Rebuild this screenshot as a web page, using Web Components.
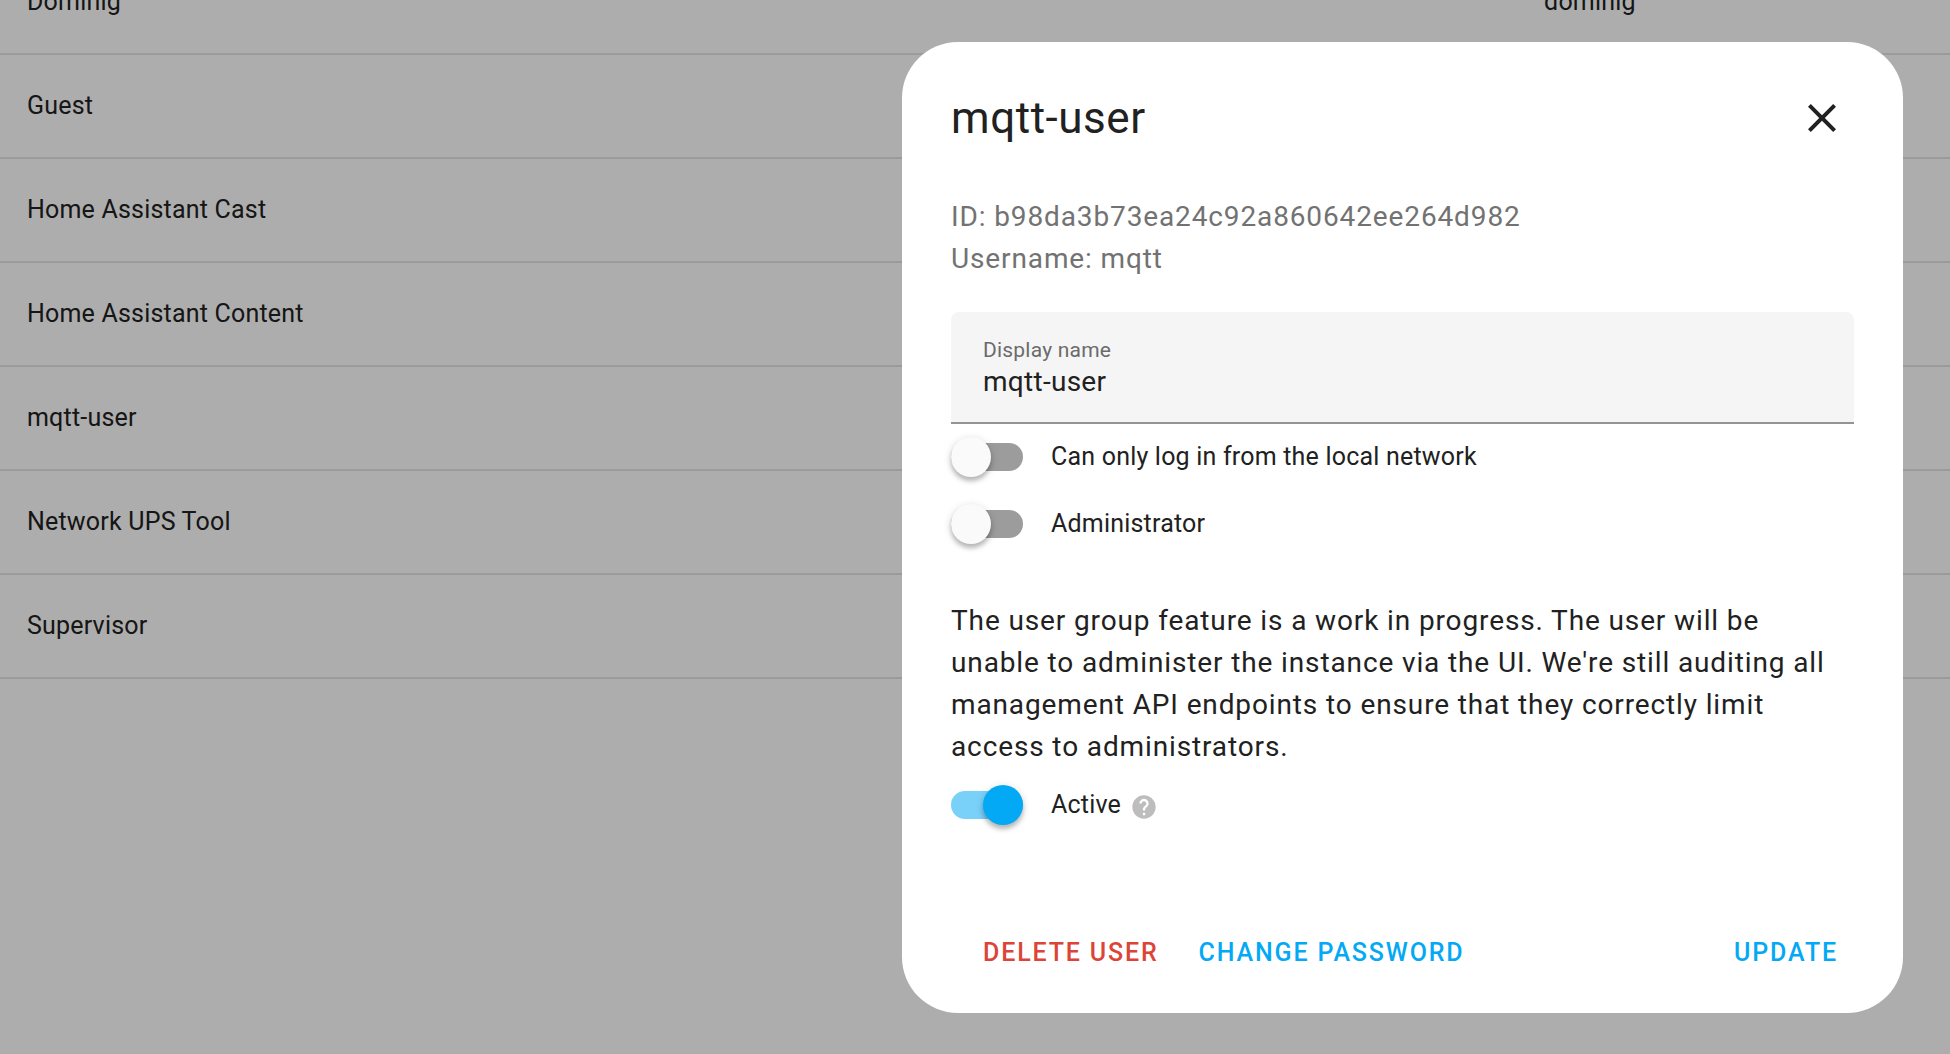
<!DOCTYPE html>
<html lang="en">
<head>
<meta charset="utf-8">
<meta name="viewport" content="width=device-width, initial-scale=1">
<title>Users</title>
<style>
  body {
    margin: 0;
    background: #fff;
    color: #212121;
    font-family: Roboto, "Liberation Sans", sans-serif;
    -webkit-font-smoothing: antialiased;
    --primary: #03a9f4;
    --error: #db4437;
    --secondary-text: #727272;
  }
</style>
</head>
<body>
<users-page>
  <users-table></users-table>
  <user-dialog slot="dialog" heading="mqtt-user">
    <user-info slot="info" user-id="b98da3b73ea24c92a860642ee264d982" username="mqtt"></user-info>
    <text-field label="Display name" value="mqtt-user"></text-field>
    <toggle-switch>Can only log in from the local network</toggle-switch>
    <toggle-switch>Administrator</toggle-switch>
    <help-note>The user group feature is a work in progress. The user will be unable to administer the instance via the UI. We're still auditing all management API endpoints to ensure that they correctly limit access to administrators.</help-note>
    <toggle-switch checked>Active<help-icon slot="suffix"></help-icon></toggle-switch>
    <action-button slot="secondary" tone="danger">Delete user</action-button>
    <action-button slot="secondary">Change password</action-button>
    <action-button slot="primary">Update</action-button>
  </user-dialog>
</users-page>

<script>
  const define = (name, html, setup) => {
    const template = document.createElement('template');
    template.innerHTML = html;
    customElements.define(name, class extends HTMLElement {
      constructor() {
        super();
        this.attachShadow({ mode: 'open' }).append(template.content.cloneNode(true));
      }
      connectedCallback() {
        if (setup) setup(this, this.shadowRoot);
      }
    });
  };

  define('users-page', `
    <style>
      :host { display: block; height: 100vh; overflow: hidden; }
      .scrim {
        position: fixed; inset: 0; box-sizing: border-box;
        display: flex; justify-content: flex-end; align-items: center;
        padding: 0 47px; background: rgba(0, 0, 0, .32);
      }
    </style>
    <slot></slot>
    <div class="scrim"><slot name="dialog"></slot></div>`);

  /* The list is scrolled so that its first row is partly out of view. */
  define('users-table', `
    <style>
      :host { display: block; margin-top: -49px; }
      table { width: 100%; border-collapse: separate; border-spacing: 0; table-layout: fixed; }
      td {
        box-sizing: border-box; height: 104px; padding: 0 27px; text-align: left;
        border-bottom: 2px solid rgba(0, 0, 0, .1);
        font-size: 25px; line-height: 36px; letter-spacing: .008em; white-space: nowrap;
      }
    </style>
    <table aria-label="Users"><colgroup><col style="width:77.8%"><col></colgroup><tbody></tbody></table>`,
    (el, root) => {
      const users = [
        ['Dominig', 'dominig'], ['Guest', ''], ['Home Assistant Cast', ''],
        ['Home Assistant Content', ''], ['mqtt-user', ''], ['Network UPS Tool', ''], ['Supervisor', '']
      ];
      const body = root.querySelector('tbody');
      for (const user of users) {
        const row = body.insertRow();
        for (const text of user) row.insertCell().textContent = text;
      }
    });

  define('user-dialog', `
    <style>
      :host { display: block; width: 100%; max-width: 1001px; }
      section {
        box-sizing: border-box; padding: 40px 49px 24px;
        background: #fff; border-radius: 56px;
      }
      header { display: flex; align-items: center; justify-content: space-between; height: 72px; }
      h2 { margin: 0; font-size: 44px; line-height: 64px; font-weight: 400; letter-spacing: .0125em; }
      .close {
        display: grid; place-items: center; width: 64px; height: 64px; padding: 0;
        border: 0; background: none; color: inherit; cursor: pointer;
      }
      .close svg { width: 48px; height: 48px; fill: currentColor; }
      .content { display: flex; flex-direction: column; padding-top: 42px; }
      footer { display: flex; justify-content: space-between; padding: 78px 0 0 16px; }
      .group { display: flex; gap: 8px; }
    </style>
    <section role="dialog" aria-modal="true" aria-labelledby="heading">
      <header>
        <h2 id="heading"></h2>
        <button class="close" type="button" aria-label="Close">
          <svg viewBox="0 0 24 24" aria-hidden="true"><path d="M19,6.41L17.59,5L12,10.59L6.41,5L5,6.41L10.59,12L5,17.59L6.41,19L12,13.41L17.59,19L19,17.59L13.41,12L19,6.41Z"/></svg>
        </button>
      </header>
      <div class="content"><slot name="info"></slot><slot></slot></div>
      <footer>
        <div class="group"><slot name="secondary"></slot></div>
        <div class="group"><slot name="primary"></slot></div>
      </footer>
    </section>`,
    (el, root) => { root.querySelector('h2').textContent = el.getAttribute('heading'); });

  define('user-info', `
    <style>
      :host { display: block; padding-bottom: 32px; color: var(--secondary-text);
        font-size: 28px; line-height: 42px; letter-spacing: .03125em; }
    </style>
    <div class="id"></div><div class="name"></div>`,
    (el, root) => {
      root.querySelector('.id').textContent = 'ID: ' + el.getAttribute('user-id');
      root.querySelector('.name').textContent = 'Username: ' + el.getAttribute('username');
    });

  define('text-field', `
    <style>
      :host { display: block; }
      .field {
        box-sizing: border-box; height: 112px; padding: 24px 32px 0;
        display: flex; flex-direction: column;
        background: #f5f5f5; border-bottom: 2px solid #949494; border-radius: 8px 8px 0 0;
      }
      label { font-size: 21px; line-height: 28px; color: #6b6b6b; letter-spacing: .01em; }
      input {
        width: 100%; height: 36px; padding: 0; border: 0; outline: 0; background: none;
        color: inherit; font: 28px/36px Roboto, "Liberation Sans", sans-serif; letter-spacing: .01em;
      }
    </style>
    <div class="field"><label for="input"></label><input id="input" type="text"></div>`,
    (el, root) => {
      root.querySelector('label').textContent = el.getAttribute('label');
      root.querySelector('input').value = el.getAttribute('value');
    });

  define('toggle-switch', `
    <style>
      :host { display: flex; align-items: center; height: 67px; }
      input {
        appearance: none; position: relative; flex: none; width: 72px; height: 28px; margin: 0 28px 0 0;
        border-radius: 14px; background: #9c9c9c; cursor: pointer;
      }
      input::before {
        content: ""; position: absolute; left: 0; top: -6px; width: 40px; height: 40px;
        border-radius: 50%; background: #fafafa;
        box-shadow: 0 4px 4px rgba(0, 0, 0, .2), 0 2px 8px rgba(0, 0, 0, .16);
      }
      input:checked { background: #79d1fa; }
      input:checked::before { left: auto; right: 0; background: var(--primary); }
      label { font-size: 25px; line-height: 36px; letter-spacing: .008em; }
      ::slotted([slot="suffix"]) { margin-left: 9px; }
    </style>
    <input id="toggle" type="checkbox" role="switch"><label for="toggle"><slot></slot></label><slot name="suffix"></slot>`,
    (el, root) => { root.querySelector('input').checked = el.hasAttribute('checked'); });

  define('help-icon', `
    <style>
      :host { display: block; padding-top: 4px; color: #bdbdbd; }
      svg { display: block; width: 28px; height: 28px; fill: currentColor; }
    </style>
    <svg viewBox="0 0 24 24" role="img" aria-label="Help"><path d="M15.07,11.25L14.17,12.17C13.45,12.89 13,13.5 13,15H11V14.5C11,13.39 11.45,12.39 12.17,11.67L13.41,10.41C13.78,10.05 14,9.55 14,9C14,7.89 13.1,7 12,7A2,2 0 0,0 10,9H8A4,4 0 0,1 12,5A4,4 0 0,1 16,9C16,9.88 15.64,10.67 15.07,11.25M13,19H11V17H13M12,2A10,10 0 0,0 2,12A10,10 0 0,0 12,22A10,10 0 0,0 22,12C22,6.47 17.5,2 12,2Z"/></svg>`);

  define('help-note', `
    <style>
      :host { display: block; padding: 42px 16px 4px 0; }
      p { margin: 0; font-size: 28px; line-height: 42px; letter-spacing: .03125em; }
    </style>
    <p><slot></slot></p>`);

  define('action-button', `
    <style>
      :host { display: block; }
      button {
        height: 72px; padding: 0 16px; border: 0; background: none; color: var(--primary);
        font: 500 25px/36px Roboto, "Liberation Sans", sans-serif; letter-spacing: .074em;
        text-transform: uppercase; white-space: nowrap; cursor: pointer;
      }
      :host([tone="danger"]) button { color: var(--error); }
    </style>
    <button type="button"><slot></slot></button>`);
</script>
</body>
</html>
